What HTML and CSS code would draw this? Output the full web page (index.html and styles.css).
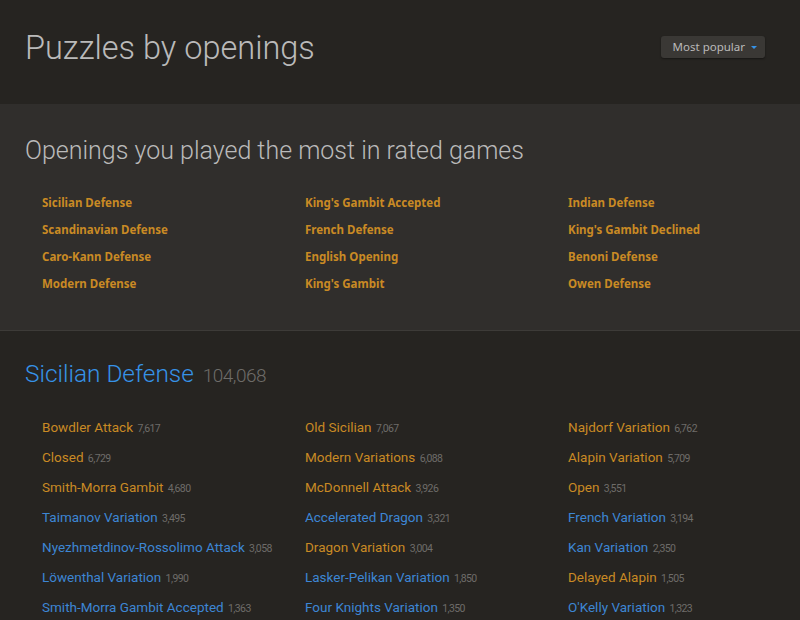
FILE: index.html
```html
<!DOCTYPE html>
<html lang="en">
<head>
  <link rel="stylesheet" href="styles.css">
</head>
<body>
  <div class="page">
    <div class="top">
      <h1 class="title">Puzzles by openings</h1>
      <div class="select">Most popular <span class="caret"></span></div>
    </div>

    <div class="mine">
      <h2 class="subtitle">Openings you played the most in rated games</h2>
      <div class="mine-list">
        <a>Sicilian Defense</a>
        <a>King's Gambit Accepted</a>
        <a>Indian Defense</a>
        <a>Scandinavian Defense</a>
        <a>French Defense</a>
        <a>King's Gambit Declined</a>
        <a>Caro-Kann Defense</a>
        <a>English Opening</a>
        <a>Benoni Defense</a>
        <a>Modern Defense</a>
        <a>King's Gambit</a>
        <a>Owen Defense</a>
      </div>
    </div>

    <div class="family">
      <h2 class="family-name">Sicilian Defense <em>104,068</em></h2>
      <div class="variations">
        <a class="played">Bowdler Attack <em>7,617</em></a>
        <a class="played">Old Sicilian <em>7,067</em></a>
        <a class="played">Najdorf Variation <em>6,762</em></a>
        <a class="played">Closed <em>6,729</em></a>
        <a class="played">Modern Variations <em>6,088</em></a>
        <a class="played">Alapin Variation <em>5,709</em></a>
        <a class="played">Smith-Morra Gambit <em>4,680</em></a>
        <a class="played">McDonnell Attack <em>3,926</em></a>
        <a class="played">Open <em>3,551</em></a>
        <a>Taimanov Variation <em>3,495</em></a>
        <a>Accelerated Dragon <em>3,321</em></a>
        <a>French Variation <em>3,194</em></a>
        <a>Nyezhmetdinov-Rossolimo Attack <em>3,058</em></a>
        <a class="played">Dragon Variation <em>3,004</em></a>
        <a>Kan Variation <em>2,350</em></a>
        <a>Löwenthal Variation <em>1,990</em></a>
        <a>Lasker-Pelikan Variation <em>1,850</em></a>
        <a class="played">Delayed Alapin <em>1,505</em></a>
        <a>Smith-Morra Gambit Accepted <em>1,363</em></a>
        <a>Four Knights Variation <em>1,350</em></a>
        <a>O'Kelly Variation <em>1,323</em></a>
      </div>
    </div>
  </div>
</body>
</html>
```

FILE: styles.css
```css
body {
  margin: 0;
  background: #262421;
  color: #bababa;
  font-family: "Noto Sans", sans-serif;
}

.page {
  width: 800px;
}

.top {
  height: 104px;
  box-sizing: border-box;
  padding: 0 35px 0 25px;
  display: flex;
  align-items: center;
  justify-content: space-between;
}

.title {
  margin: 0;
  font-family: Roboto, sans-serif;
  font-weight: 300;
  font-size: 32.5px;
  color: #bababa;
  position: relative;
  top: -4px;
}

.select {
  background: #3a3835;
  border-radius: 3px;
  box-shadow: 0 1px 2px rgba(0, 0, 0, 0.4);
  font-size: 11.5px;
  color: #bababa;
  padding: 0 8px 0 12px;
  height: 22px;
  line-height: 22px;
  position: relative;
  top: -5px;
}

.caret {
  display: inline-block;
  width: 0;
  height: 0;
  margin-left: 3px;
  border-left: 3px solid transparent;
  border-right: 3px solid transparent;
  border-top: 3px solid #3692e7;
  vertical-align: 2px;
}

.mine {
  background: #302e2c;
  border-bottom: 1px solid #3d3b38;
  height: 227px;
  box-sizing: border-box;
  padding: 32px 0 0 25px;
}

.subtitle {
  margin: 0 0 29px;
  font-family: Roboto, sans-serif;
  font-weight: 300;
  font-size: 25px;
  color: #bababa;
}

.mine-list {
  display: grid;
  grid-template-columns: 263px 263px 263px;
  row-gap: 10px;
  padding-left: 17px;
}

.mine-list a {
  font-size: 11.5px;
  font-weight: 700;
  color: #c98a24;
  line-height: 17px;
}

.family {
  padding: 28px 0 0 25px;
}

.family-name {
  margin: 0 0 24px;
  font-family: Roboto, sans-serif;
  font-weight: 300;
  font-size: 24.4px;
  color: #3692e7;
}

.family-name em {
  font-style: normal;
  font-size: 19px;
  color: #6e6c69;
  margin-left: 3px;
  letter-spacing: -0.5px;
}

.variations {
  display: grid;
  grid-template-columns: 263px 263px 263px;
  padding-left: 17px;
}

.variations a {
  display: block;
  height: 30px;
  font-family: Roboto, sans-serif;
  font-size: 13.5px;
  line-height: 30px;
  color: #3d86d4;
  white-space: nowrap;
}

.variations a.played {
  color: #c98a24;
}

.variations em {
  font-style: normal;
  font-size: 10.5px;
  line-height: 1;
  color: #6e6c69;
  margin-left: 1px;
  letter-spacing: -0.6px;
}
```
